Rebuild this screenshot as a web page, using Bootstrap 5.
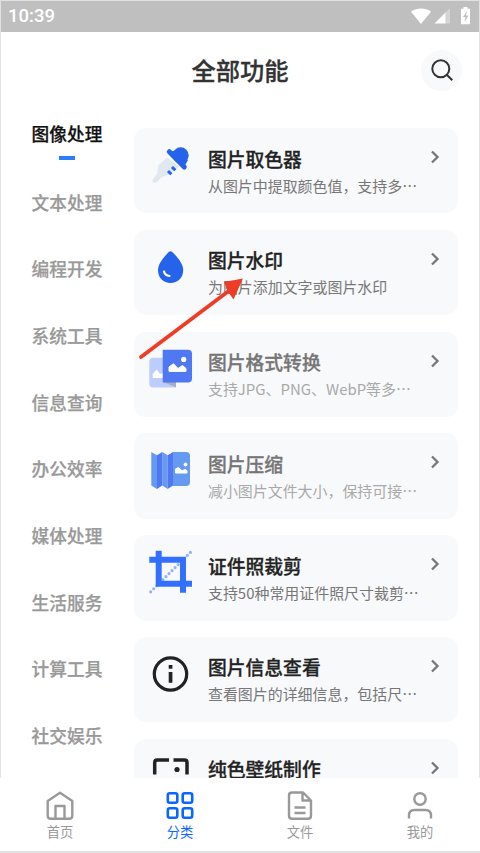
<!DOCTYPE html>
<html lang="zh-CN">
<head>
<meta charset="utf-8">
<meta name="viewport" content="width=device-width, initial-scale=1">
<title>全部功能</title>
<link href="https://cdn.jsdelivr.net/npm/bootstrap@5.3.0/dist/css/bootstrap.min.css" rel="stylesheet">
<style>
body{font-family:"Noto Sans CJK SC",sans-serif;background:#fff;color:#222;height:853px;overflow:hidden}
.screen{height:853px;border:1px solid #e1e1e1;border-bottom-width:2px}
.status{height:31px;background:#bfbfbf;padding:0 8px 0 7px;font:500 18.5px/31px Roboto,sans-serif;color:#fff}
.top-title{height:85px;display:grid;grid-template-columns:1fr auto 1fr;padding:0 17px 9px;align-items:center}
.top-title h1{font-size:24.3px;font-weight:500;line-height:36px;color:#333;-webkit-text-stroke:.3px}
.find{width:41px;height:41px;background:#f8f9fb}
.content{height:661px}
.side{width:132px;padding-top:3px}
.side a{height:66.65px;font-size:17.7px;font-weight:500;line-height:26px;color:#999;text-decoration:none;-webkit-text-stroke:.25px}
.side a.active{color:#111;height:48.5px;line-height:27px}
.side a.active::after{content:"";width:16px;height:4px;background:#2b7fff;margin-top:8.5px}
.tools{width:326px;padding:11px 1px 0;gap:16.4px}
.tool{height:85.4px;border-radius:12px;background:#f8f9fb;padding:15px 18px 0 14px}
.tool .pic{width:44px;height:44px}
.tool .words{width:222px;margin-left:16px;padding-top:1.5px}
.tool h2{font-size:18.8px;font-weight:500;line-height:27px;color:#222;margin:0;-webkit-text-stroke:.3px}
.tool p{font-size:14.95px;line-height:27px;color:#777;margin:0}
.tool .go{width:10px;height:16px;margin-top:6px}
.tool.faded h2{color:#757575}.tool.faded p{color:#a9a9a9}
.tabs{height:73px;background:#fff;padding-top:10px;margin:0 -1px}
.tabs a{color:#999;font-size:13.3px;line-height:20px;text-decoration:none}
.tabs a.active{color:#0a66ff}
.pointer{left:130px;top:270px}
</style>
<script src="https://cdn.jsdelivr.net/npm/bootstrap@5.3.0/dist/js/bootstrap.bundle.min.js"></script>
</head>
<body>
<svg class="d-none"><symbol id="chev" viewBox="0 0 10 16"><path d="M2 2.500 7.500 8 2 13.500" fill="none" stroke="#777" stroke-width="2.300"/></symbol></svg>
<div class="screen d-flex flex-column position-relative">
<header class="status d-flex justify-content-between align-items-center flex-shrink-0"><span>10:39</span>
<svg width="62" height="20" viewBox="0 0 62 20" fill="#fff"><path d="M2 4.700C7.500.3 16.500.3 22 4.700L12 17Z"/><path d="M41 1v15.500H36.500V5.500Z" opacity=".35"/><path d="M25.500 16.500 36.500 5.500v11Z"/><path d="M52 1.800h2.500V0h4v1.800H61v15.400h-9Z"/><path d="m58 4-4 6h2.500l-1 5 4-6.500H57Z" fill="#bfbfbf"/></svg></header>
<div class="top-title flex-shrink-0"><span></span><h1 class="m-0">全部功能</h1>
<button class="find btn p-0 border-0 rounded-circle d-flex align-items-center justify-content-center ms-auto" aria-label="搜索"><svg width="24" height="24" viewBox="0 0 24 24" fill="none" stroke="#333" stroke-width="2"><circle cx="10.800" cy="10.800" r="8.500"/><path d="m17 17 5.300 5.300"/></svg></button></div>
<main class="content d-flex overflow-hidden flex-shrink-0">
<nav class="side d-flex flex-column flex-shrink-0">
<a class="active d-flex flex-column align-items-center" href="#">图像处理</a>
<a class="d-flex align-items-center justify-content-center flex-shrink-0" href="#">文本处理</a><a class="d-flex align-items-center justify-content-center flex-shrink-0" href="#">编程开发</a><a class="d-flex align-items-center justify-content-center flex-shrink-0" href="#">系统工具</a><a class="d-flex align-items-center justify-content-center flex-shrink-0" href="#">信息查询</a><a class="d-flex align-items-center justify-content-center flex-shrink-0" href="#">办公效率</a><a class="d-flex align-items-center justify-content-center flex-shrink-0" href="#">媒体处理</a><a class="d-flex align-items-center justify-content-center flex-shrink-0" href="#">生活服务</a><a class="d-flex align-items-center justify-content-center flex-shrink-0" href="#">计算工具</a><a class="d-flex align-items-center justify-content-center flex-shrink-0" href="#">社交娱乐</a>
</nav>
<section class="tools d-flex flex-column">
<article class="tool d-flex flex-shrink-0"><svg class="pic" viewBox="0 0 44 44"><path d="M19 14.500 10.500 22 9 31l-4 5q-1.500 3 .5 3.500 2 .5 3.500-.8l5-4.700 8-2.500L31 23.500Z" fill="#e2e8f0"/><circle cx="32.700" cy="12.300" r="8" fill="#2563eb"/><path d="M21.300 8.700 36.300 24" stroke="#2563eb" stroke-width="5" stroke-linecap="round"/><path d="m22 9 6-2 12 10-4 7Z" fill="#2563eb"/><path d="m20 28 3.300 3.300m.7-7.300 3.300 3.300" stroke="#2563eb" stroke-width="3"/></svg>
<div class="words"><h2>图片取色器</h2><p class="text-nowrap">从图片中提取颜色值，支持多⋯</p></div><svg class="go ms-auto"><use href="#chev"/></svg></article>
<article class="tool d-flex flex-shrink-0"><svg class="pic" viewBox="0 0 44 44"><path d="M24 6.800q-1.500-1.300-3 0C16 12 10 18.500 10 25.200c0 8 5.500 12.700 12.500 12.700S35.200 33.200 35.200 25.200C35.200 18.500 29 11.500 24 6.800Z" fill="#2563eb"/><path d="M16 26.500q1 4 5.500 4.500" fill="none" stroke="#fff" stroke-width="2.200" stroke-linecap="round"/></svg>
<div class="words"><h2>图片水印</h2><p class="text-nowrap">为图片添加文字或图片水印</p></div><svg class="go ms-auto"><use href="#chev"/></svg></article>
<article class="tool faded d-flex flex-shrink-0"><svg class="pic" viewBox="0 0 44 44"><path d="M15 10.700H5.300q-4 0-4 4v21.700q0 4 4 4H28L15 35Z" fill="#becdff"/><path d="M4.700 31v-4l4-4.500L12 27l3-1v5Z" fill="#fff"/><path d="M14.700 35H28v5.400Z" fill="#a2adc9"/><path d="M14.700 2.700H40q4 0 4 4v24.700q0 4-4 4H14.700Z" fill="#4f78f2"/><path d="M21 24.400V20l4.500-3.300 4.500 4.800 4.500-3 3.500 3v2.900Z" fill="#fff" stroke="#fff" stroke-linejoin="round"/><circle cx="35.700" cy="12.400" r="2.600" fill="#fff"/></svg>
<div class="words"><h2>图片格式转换</h2><p class="text-nowrap">支持JPG、PNG、WebP等多⋯</p></div><svg class="go ms-auto"><use href="#chev"/></svg></article>
<article class="tool faded d-flex flex-shrink-0"><svg class="pic" viewBox="0 0 44 44"><path d="M25 4h13q4 0 4 4v26q0 4-4 4H25Z" fill="#669af1"/><path d="m3.300 4 5.700 3.300V41l-5.700-3.500ZM14.300 4l5.400 3.300V41l-5.400-3.500Z" fill="#669af1"/><path d="M9 7.300 14.300 4v33.500L9 41ZM19.700 7.300 25 4v33.500L19.700 41Z" fill="#4f78f2"/><path d="M27.500 25v-4l3-1.500L34 22.800l3-1.300 2 1V25Z" fill="#fff" stroke="#fff" stroke-linejoin="round"/><circle cx="37.500" cy="16.500" r="1.900" fill="#fff"/></svg>
<div class="words"><h2>图片压缩</h2><p class="text-nowrap">减小图片文件大小，保持可接⋯</p></div><svg class="go ms-auto"><use href="#chev"/></svg></article>
<article class="tool d-flex flex-shrink-0"><svg class="pic" viewBox="0 0 44 44"><path d="M2.700 41.800 43 1.800" stroke="#92b2ff" stroke-width="3.200" stroke-linecap="round" stroke-dasharray="0 4.300"/><path d="M1.300 9.800H35v33M10.700.8v33H44" fill="none" stroke="#3370ff" stroke-width="6"/></svg>
<div class="words"><h2>证件照裁剪</h2><p class="text-nowrap">支持50种常用证件照尺寸裁剪⋯</p></div><svg class="go ms-auto"><use href="#chev"/></svg></article>
<article class="tool d-flex flex-shrink-0"><svg class="pic" viewBox="0 0 44 44"><circle cx="22.500" cy="22" r="16.200" fill="none" stroke="#222" stroke-width="3.200"/><path d="M20.700 13h3.700v3.700h-3.700Zm0 7h3.700v10.800h-3.700Z" fill="#222"/></svg>
<div class="words"><h2>图片信息查看</h2><p class="text-nowrap">查看图片的详细信息，包括尺⋯</p></div><svg class="go ms-auto"><use href="#chev"/></svg></article>
<article class="tool d-flex flex-shrink-0"><svg class="pic" viewBox="0 0 44 44"><path d="M6.700 20.500V8.400q0-2.500 2.500-2.500H21m4.500 0h11q2.500 0 2.500 2.500v12.100M6.700 24v12.500q0 2.500 2.500 2.500H21m4.500 0h11q2.500 0 2.500-2.500V24" fill="none" stroke="#222" stroke-width="3.500"/><circle cx="29" cy="15.500" r="2.600" fill="#222"/><path d="m10 33 8-9 5 6 4-6 8 9Z" fill="#222"/></svg>
<div class="words"><h2>纯色壁纸制作</h2></div><svg class="go ms-auto"><use href="#chev"/></svg></article>
</section></main>
<nav class="tabs row g-0 text-center flex-shrink-0">
<a class="col d-flex flex-column align-items-center" href="#"><svg width="34" height="34" viewBox="0 0 34 34" fill="none" stroke="currentColor" stroke-width="2.400" stroke-linejoin="round"><path d="M4.700 13 17 4.800 29.300 13v14.700q0 3-3 3H7.700q-3 0-3-3ZM12.500 30V18h9v12"/></svg><span>首页</span></a>
<a class="active col d-flex flex-column align-items-center" href="#"><svg width="34" height="34" viewBox="0 0 34 34" fill="none" stroke="currentColor" stroke-width="2.600"><rect x="4.800" y="5.300" width="9.500" height="9.500" rx="2"/><rect x="19.700" y="5.300" width="9.500" height="9.500" rx="2"/><rect x="4.800" y="20.200" width="9.500" height="9.500" rx="2"/><rect x="19.700" y="20.200" width="9.500" height="9.500" rx="2"/></svg><span>分类</span></a>
<a class="col d-flex flex-column align-items-center" href="#"><svg width="34" height="34" viewBox="0 0 34 34" fill="none" stroke="currentColor" stroke-width="2.400" stroke-linejoin="round"><path d="M9 4.500h11l8 8v15.200q0 3-3 3H9q-3 0-3-3V7.500q0-3 3-3ZM19.500 5v7.500H28M11.500 19.500h11m-11 5.500h11"/></svg><span>文件</span></a>
<a class="col d-flex flex-column align-items-center" href="#"><svg width="34" height="34" viewBox="0 0 34 34" fill="none" stroke="currentColor" stroke-width="2.400"><circle cx="17" cy="11" r="5.700"/><path d="M6 30.500v-3q0-5.500 5.500-5.500h11q5.500 0 5.500 5.500v3"/></svg><span>我的</span></a>
</nav>
<svg class="pointer position-absolute" width="120" height="95" viewBox="0 0 120 95"><path d="M10 86 99 19" stroke="#ee3d27" stroke-width="3.800" stroke-linecap="round"/><path d="M112 7.500 93 11l3.500 9 6 8.500Z" fill="#ee3d27"/></svg>
</div>
</body>
</html>
